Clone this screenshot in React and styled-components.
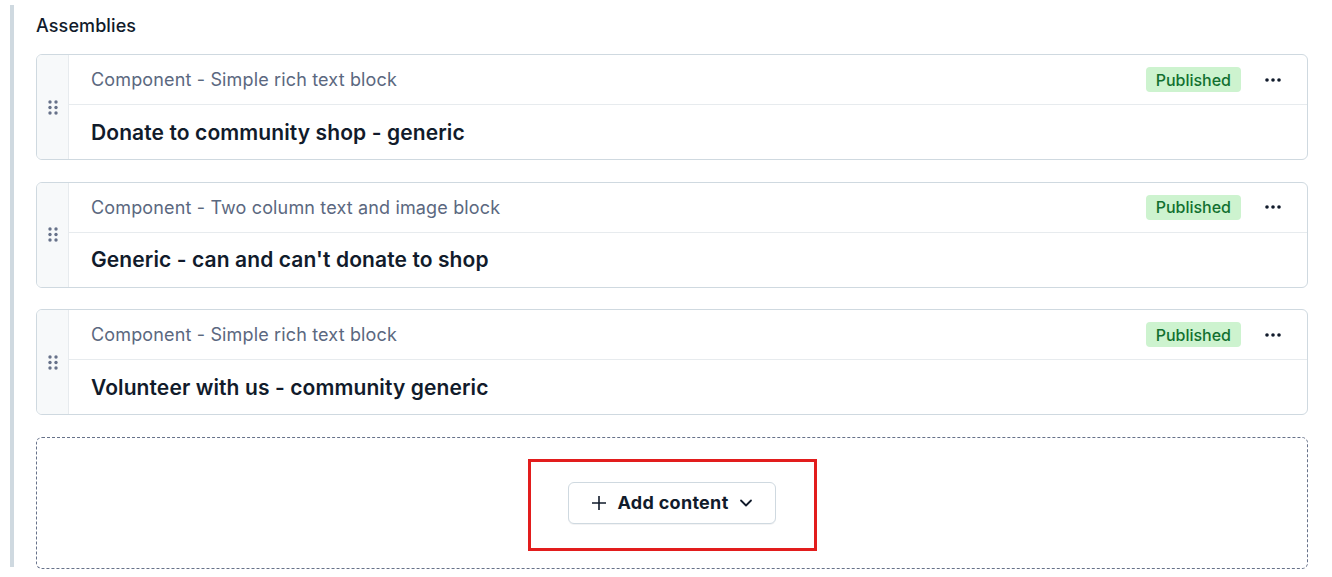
import React from "react";
import styled, { createGlobalStyle } from "styled-components";

const GlobalStyle = createGlobalStyle`
  body {
    margin: 0;
    background: #ffffff;
    font-family: Inter, "Noto Sans", sans-serif;
    color: #111b2b;
  }
`;

const entries = [
  { type: "Component - Simple rich text block", title: "Donate to community shop - generic" },
  { type: "Component - Two column text and image block", title: "Generic - can and can't donate to shop" },
  { type: "Component - Simple rich text block", title: "Volunteer with us - community generic" },
];

const DragHandle = () => (
  <svg width="10" height="15" viewBox="0 0 10 15" fill="#67728a">
    {[2, 7.5, 13].map((y) =>
      [2, 8].map((x) => <circle key={`${x}-${y}`} cx={x} cy={y} r="1.7" />)
    )}
  </svg>
);

const MoreIcon = () => (
  <svg width="16" height="4" viewBox="0 0 16 4" fill="#111b2b">
    <circle cx="2" cy="2" r="1.8" />
    <circle cx="8" cy="2" r="1.8" />
    <circle cx="14" cy="2" r="1.8" />
  </svg>
);

const PlusIcon = () => (
  <svg width="16" height="16" viewBox="0 0 16 16" stroke="#111b2b" strokeWidth="1.6" fill="none">
    <path d="M8 1v14M1 8h14" />
  </svg>
);

const ChevronIcon = () => (
  <svg width="14" height="14" viewBox="0 0 14 14" stroke="#111b2b" strokeWidth="1.8" fill="none" strokeLinecap="round" strokeLinejoin="round">
    <path d="M2 4.5l5 5 5-5" />
  </svg>
);

const EntryCard = ({ type, title }) => (
  <Card>
    <Handle>
      <DragHandle />
    </Handle>
    <Body>
      <Header>
        <TypeLabel>{type}</TypeLabel>
        <Actions>
          <Badge>Published</Badge>
          <MenuButton>
            <MoreIcon />
          </MenuButton>
        </Actions>
      </Header>
      <Title>{title}</Title>
    </Body>
  </Card>
);

export default function App() {
  return (
    <>
      <GlobalStyle />
      <Page>
        <Field>
          <Label>Assemblies</Label>
          <List>
            {entries.map((e, i) => (
              <EntryCard key={i} type={e.type} title={e.title} />
            ))}
            <DropZone>
              <ButtonWrap>
                <AddButton>
                  <PlusIcon />
                  Add content
                  <ChevronIcon />
                </AddButton>
                <Highlight />
              </ButtonWrap>
            </DropZone>
          </List>
        </Field>
      </Page>
    </>
  );
}

const Page = styled.div`
  padding: 5px 24px 0 10px;
  height: 572px;
  box-sizing: border-box;
`;

const Field = styled.div`
  border-left: 4px solid #cfd9e0;
  padding: 10px 0 0 22px;
  height: 562px;
  box-sizing: border-box;
`;

const Label = styled.div`
  font-size: 18px;
  line-height: 22px;
  font-weight: 500;
  letter-spacing: 0.1px;
  color: #111b2b;
  margin-bottom: 17px;
`;

const List = styled.div`
  display: flex;
  flex-direction: column;
  gap: 21.5px;
`;

const Card = styled.div`
  display: flex;
  border: 1px solid #cfd9e0;
  border-radius: 6px;
  overflow: hidden;
  background: #ffffff;
`;

const Handle = styled.div`
  width: 31px;
  flex-shrink: 0;
  background: #f7f9fa;
  border-right: 1px solid #e7ebee;
  display: flex;
  align-items: center;
  justify-content: center;
`;

const Body = styled.div`
  flex: 1;
  min-width: 0;
`;

const Header = styled.div`
  display: flex;
  align-items: center;
  justify-content: space-between;
  height: 49px;
  padding: 0 18px 0 22px;
  border-bottom: 1px solid #e7ebee;
`;

const TypeLabel = styled.div`
  font-size: 18px;
  letter-spacing: 0.15px;
  color: #5b6880;
`;

const Actions = styled.div`
  display: flex;
  align-items: center;
  gap: 16px;
`;

const Badge = styled.span`
  display: inline-flex;
  align-items: center;
  height: 25px;
  padding: 0 10px;
  border-radius: 4px;
  background: #cdf3cf;
  color: #127030;
  font-size: 16px;
  font-weight: 500;
`;

const MenuButton = styled.button`
  border: none;
  background: transparent;
  width: 32px;
  height: 32px;
  display: flex;
  align-items: center;
  justify-content: center;
  padding: 0;
  cursor: pointer;
`;

const Title = styled.div`
  height: 54px;
  display: flex;
  align-items: center;
  padding-left: 22px;
  font-size: 21px;
  font-weight: 600;
  letter-spacing: 0.1px;
  color: #111b2b;
`;

const DropZone = styled.div`
  border: 1px dashed #67728a;
  border-radius: 6px;
  height: 132px;
  box-sizing: border-box;
  display: flex;
  align-items: center;
  justify-content: center;
`;

const ButtonWrap = styled.div`
  position: relative;
`;

const AddButton = styled.button`
  display: flex;
  align-items: center;
  gap: 10px;
  height: 42px;
  padding: 0 22px;
  border: 1px solid #cfd9e0;
  border-radius: 6px;
  background: #ffffff;
  box-shadow: 0 1px 0 rgba(17, 27, 43, 0.05);
  font-family: Inter, "Noto Sans", sans-serif;
  font-size: 18px;
  font-weight: 700;
  letter-spacing: 0.3px;
  color: #111b2b;
  cursor: pointer;
`;

const Highlight = styled.div`
  position: absolute;
  top: -23px;
  bottom: -27px;
  left: -40px;
  right: -41px;
  border: 3px solid #e21d1d;
  pointer-events: none;
`;
